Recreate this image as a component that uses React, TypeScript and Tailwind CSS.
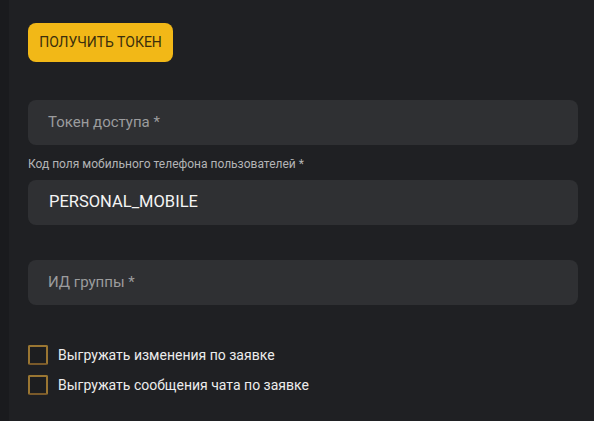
import { useState } from "react";

function Field({ placeholder, value }: { placeholder: string; value?: string }) {
  return (
    <div className="flex h-[45px] w-[550px] items-center rounded-lg bg-[#2f3033] px-5">
      {value ? (
        <span className="pl-px text-[16.5px] text-[#f4f4f4]">{value}</span>
      ) : (
        <span className="text-[15px] text-[#9b9c9e]">{placeholder}</span>
      )}
    </div>
  );
}

function Check({ label }: { label: string }) {
  const [on, setOn] = useState(false);
  return (
    <label className="flex h-[20px] cursor-pointer items-center gap-[10px]" onClick={() => setOn(!on)}>
      <span className="h-[20px] w-[20px] rounded-[2px] border-2 border-[#9a7632] border-b-[#7a5a2a] bg-[#1d1e20]" />
      <span className="text-[14px] text-[#ececec]">{label}</span>
    </label>
  );
}

export default function App() {
  return (
    <div className="flex h-[421px] w-[594px] bg-[#1f2023] font-['Roboto',sans-serif]">
      <div className="w-[9px] bg-[#1a1b1e]" />
      <div className="flex flex-1 flex-col pl-[19px] pt-[23px]">
        <button className="h-[39px] w-[145px] rounded-lg bg-[#f2b817] text-[14px] text-[#3b2f0c]">
          ПОЛУЧИТЬ ТОКЕН
        </button>

        <div className="mt-[38px]">
          <Field placeholder="Токен доступа *" />
        </div>

        <p className="mt-[12px] text-[12px] leading-[14px] text-[#b3b4b6]">
          Код поля мобильного телефона пользователей *
        </p>
        <div className="mt-[9px]">
          <Field placeholder="" value="PERSONAL_MOBILE" />
        </div>

        <div className="mt-[35px]">
          <Field placeholder="ИД группы *" />
        </div>

        <div className="mt-[40px] flex flex-col gap-[10px]">
          <Check label="Выгружать изменения по заявке" />
          <Check label="Выгружать сообщения чата по заявке" />
        </div>
      </div>
    </div>
  );
}
